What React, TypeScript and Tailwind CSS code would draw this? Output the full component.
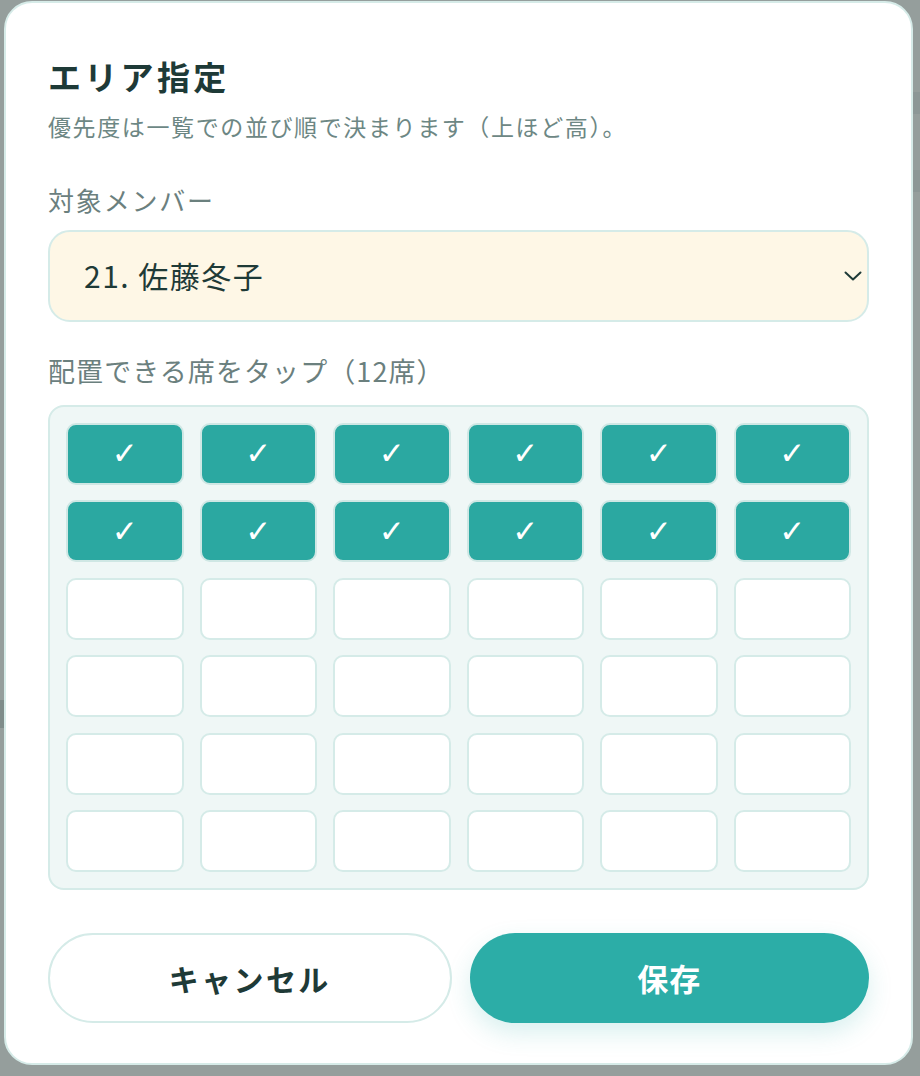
import React from "react";

const font = { fontFamily: '"Noto Sans CJK JP", "Noto Sans", sans-serif' };

export default function App() {
  const cells = Array.from({ length: 36 }, (_, i) => i < 12);
  return (
    <div className="relative w-[920px] h-[1076px] bg-[#959e9c] overflow-hidden" style={font}>
      {/* hints of page behind overlay */}
      <div className="absolute right-0 top-[92px] w-[10px] h-[22px] bg-[#8c9796]" />
      <div className="absolute right-0 top-[170px] w-[10px] h-[22px] bg-[#8c9796]" />
      <div className="absolute left-0 top-[700px] w-[6px] h-[28px] bg-[#7f8c8a]" />
      <div className="absolute left-[4px] top-[1px] w-[909px] h-[1064px] bg-white rounded-[28px] border-2 border-[#d6ebe8] px-[42px] pt-[51px] pb-[40px] flex flex-col">
        <h1 className="text-[33px] leading-[44px] font-bold tracking-[0.1em] text-[#1e3a37]">エリア指定</h1>
        <p className="mt-[12px] text-[23px] leading-[32px] tracking-[0.07em] text-[#6d8784]">
          優先度は一覧での並び順で決まります（上ほど高）。
        </p>
        <div className="mt-[40px] text-[26px] leading-[36px] tracking-[0.07em] text-[#6b807e]">対象メンバー</div>
        <div className="mt-[12px] h-[92px] rounded-[22px] border-2 border-[#d5ebe8] bg-[#fef7e6] flex items-center justify-between pl-[34px] pr-[4px]">
          <span className="text-[30px] tracking-[0.05em] text-[#1e3a37]">21. 佐藤冬子</span>
          <svg width="20" height="12" viewBox="0 0 20 12" fill="none">
            <path d="M2.5 2.5 L10 9.5 L17.5 2.5" stroke="#1e3a37" strokeWidth="2" strokeLinecap="round" strokeLinejoin="round" />
          </svg>
        </div>
        <div className="mt-[31px] text-[27px] leading-[36px] tracking-[0.04em] text-[#6b807e]">配置できる席をタップ（12席）</div>
        <div className="mt-[16px] rounded-[16px] border-2 border-[#d5ebe8] bg-[#eff7f6] p-[16px] grid grid-cols-6 gap-x-[16px] gap-y-[15.5px]">
          {cells.map((on, i) =>
            on ? (
              <div
                key={i}
                className="h-[62px] rounded-[10px] bg-[#2ba8a1] border-2 border-[#cfe7e4] flex items-center justify-center text-white text-[31px]"
                style={{ fontFamily: '"DejaVu Sans", sans-serif' }}
              >
                ✓
              </div>
            ) : (
              <div key={i} className="h-[62px] rounded-[10px] bg-white border-2 border-[#d5ebe8]" />
            )
          )}
        </div>
        <div className="mt-[43px] flex gap-[18px]">
          <button className="flex-1 h-[90px] rounded-full bg-white border-2 border-[#d5ebe8] text-[30px] font-bold tracking-[0.08em] text-[#1e3a37]">
            キャンセル
          </button>
          <button className="flex-1 h-[90px] rounded-full bg-[#2cada7] text-[31px] font-bold tracking-[0.03em] text-white shadow-[0_10px_24px_rgba(44,173,167,0.18)]">
            保存
          </button>
        </div>
      </div>
    </div>
  );
}
